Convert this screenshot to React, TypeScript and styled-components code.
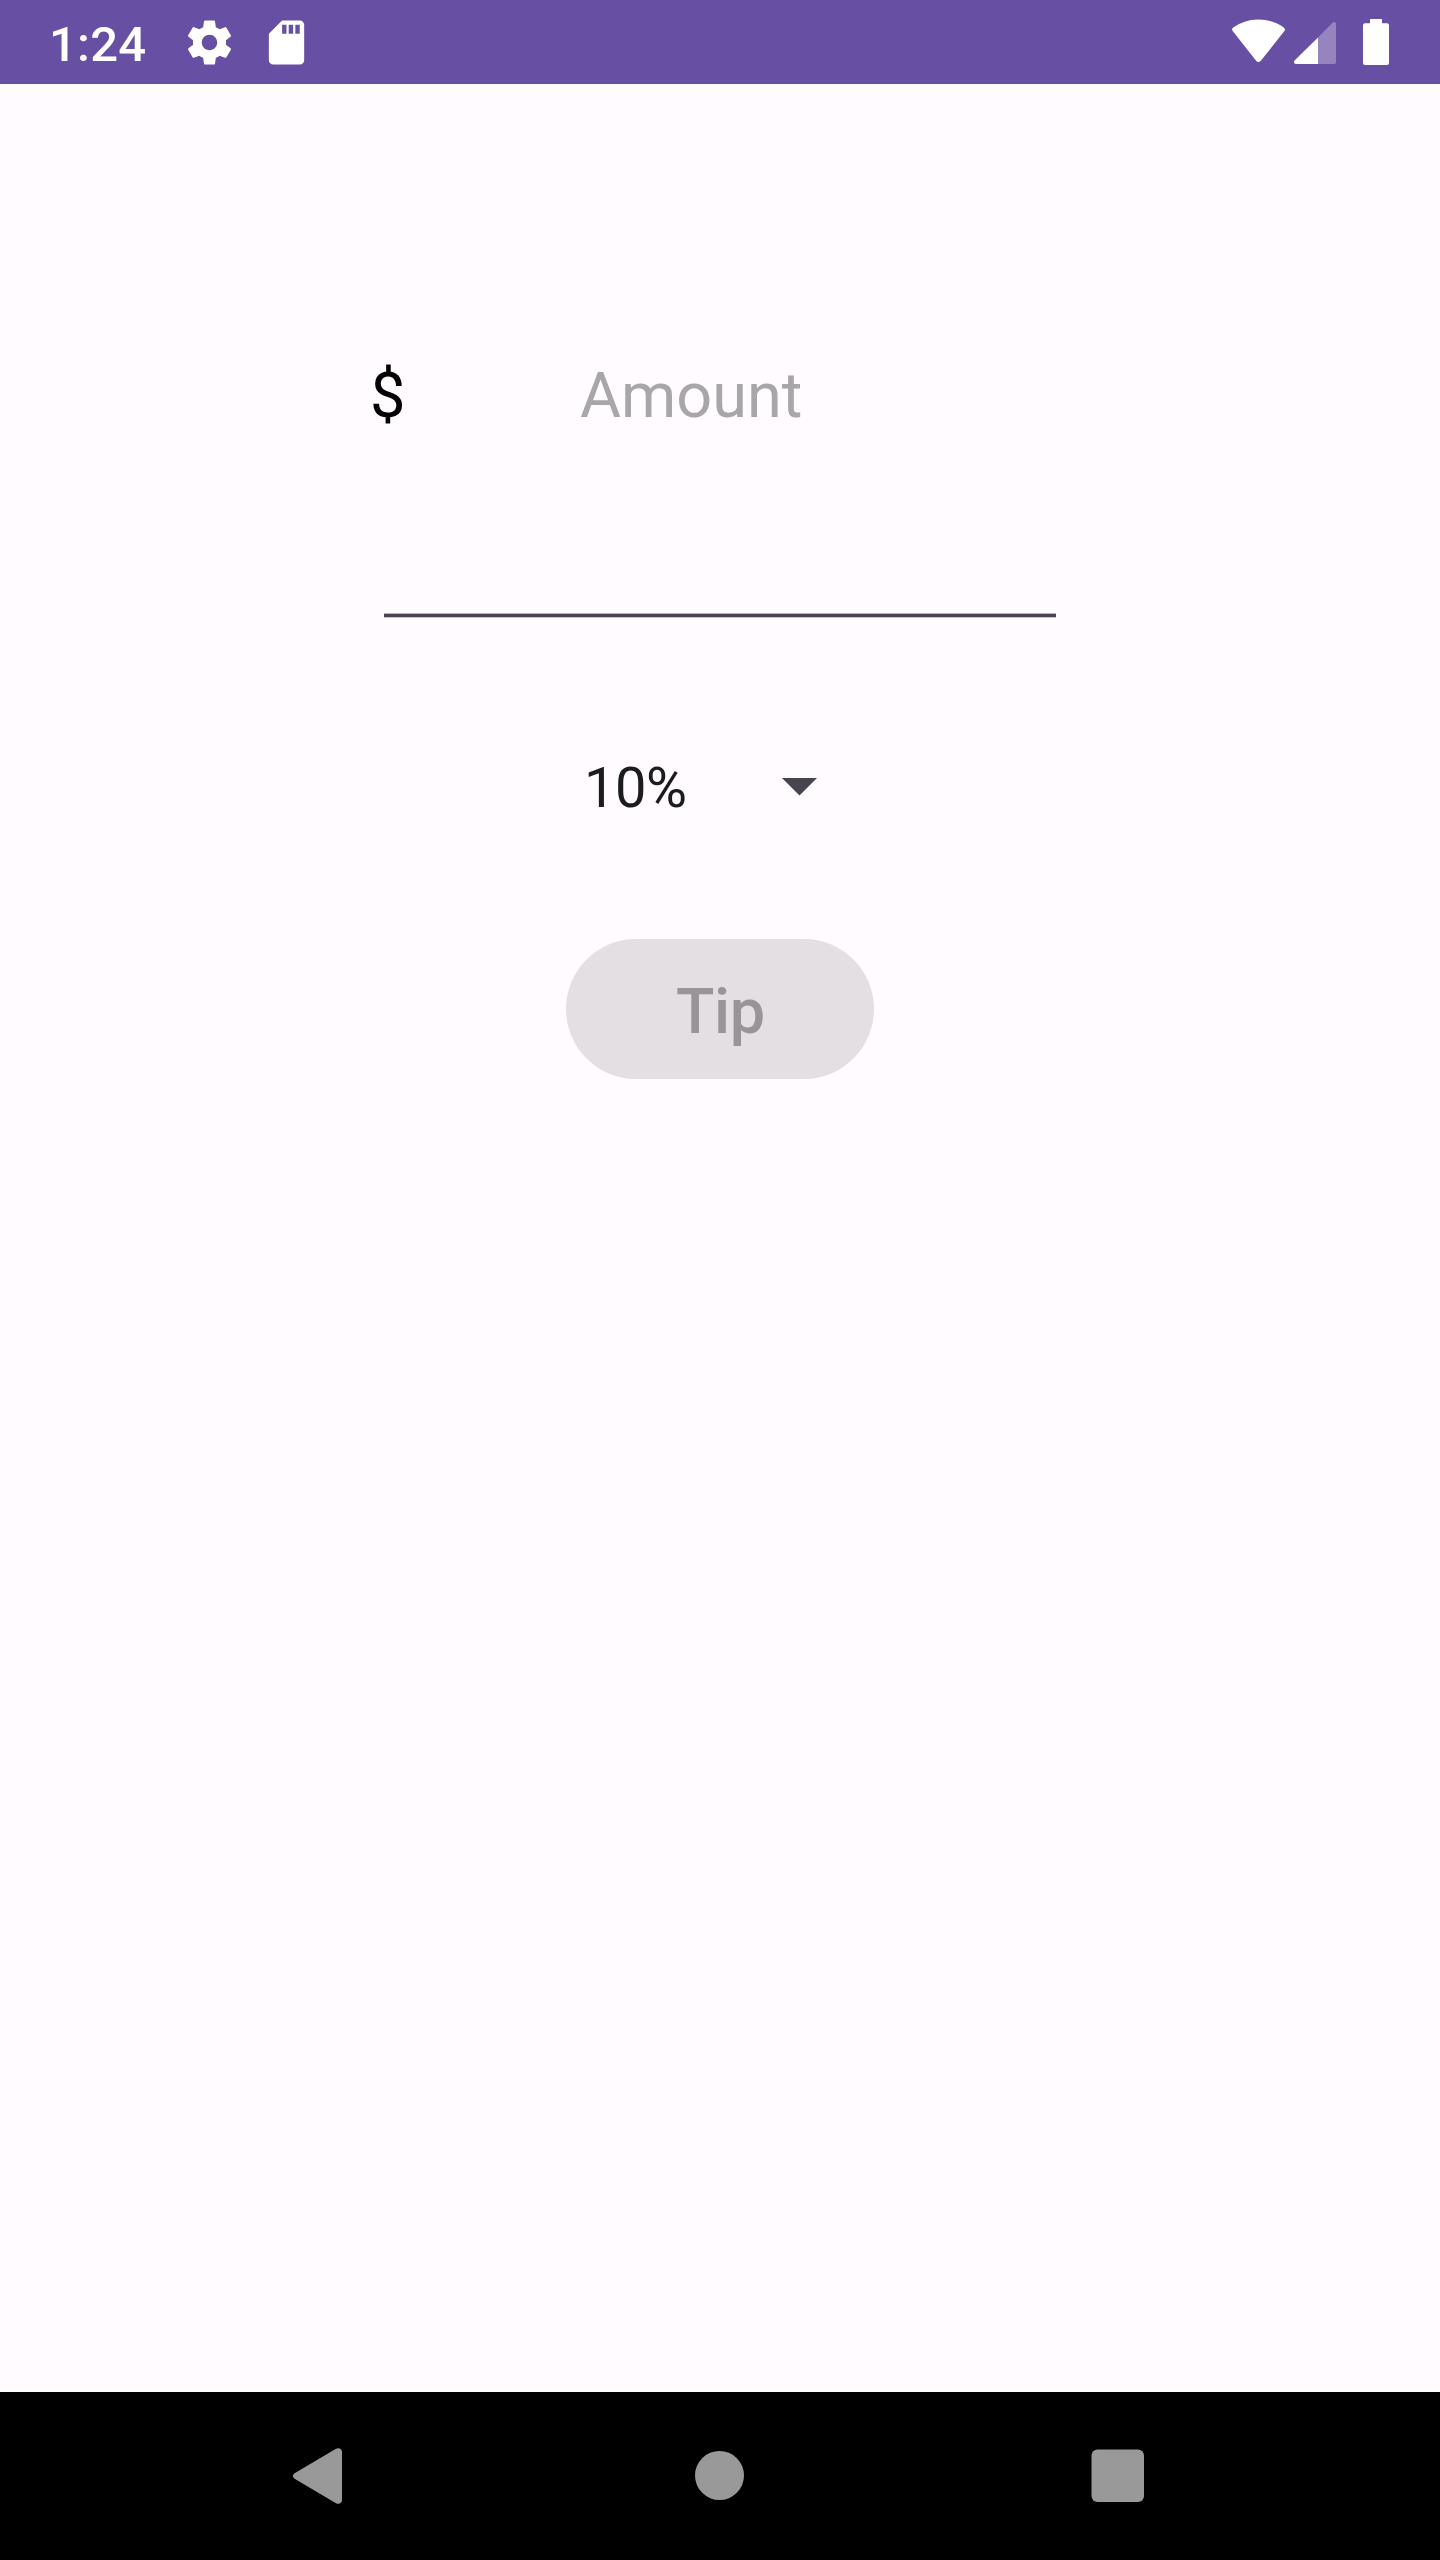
import React from "react";
import styled, { createGlobalStyle } from "styled-components";

const GlobalStyle = createGlobalStyle`
  *, *::before, *::after { box-sizing: border-box; }
  body { margin: 0; background: #fffbfe; }
`;

const Screen = styled.div`
  display: flex;
  flex-direction: column;
  width: 1440px;
  height: 2560px;
  background: #fffbfe;
  font-family: Roboto, "Liberation Sans", sans-serif;
  overflow: hidden;
`;

const StatusBar = styled.header`
  display: flex;
  justify-content: space-between;
  height: 84px;
  padding: 0 51px 0 49px;
  background: #6750a3;
  color: #fff;
`;

const StatusGroup = styled.div`
  display: flex;
  align-items: center;
  height: 84px;
`;

const Clock = styled.span`
  width: 97px;
  margin-right: 37px;
  padding-top: 5px;
  font-size: 49px;
  font-weight: 500;
  line-height: 58px;
  letter-spacing: 0.2px;
  white-space: nowrap;
`;

const Icon = styled.svg<{ $gap?: number }>`
  display: block;
  flex: none;
  margin-left: ${({ $gap = 0 }) => $gap}px;
`;

const Content = styled.main`
  display: flex;
  flex: 1;
  flex-direction: column;
  align-items: center;
`;

const AmountField = styled.section`
  display: flex;
  width: 700px;
  height: 534px;
  padding: 275px 14px 0 0;
  background: linear-gradient(#b7b4b9, #b7b4b9) 14px 529px / 672px 1px no-repeat,
    linear-gradient(#49454f, #49454f) 14px 530px / 672px 3px no-repeat,
    linear-gradient(#c9c6ca, #c9c6ca) 14px 533px / 672px 1px no-repeat;
`;

const Currency = styled.span`
  width: 210px;
  color: #000;
  font-size: 63px;
  line-height: 74px;
`;

const AmountLabel = styled.span`
  color: #a8a6a8;
  font-size: 63px;
  line-height: 74px;
`;

const PercentSelect = styled.div`
  display: flex;
  align-items: center;
  justify-content: space-between;
  width: 234px;
  height: 66px;
  margin: 137px 40px 0 0;
  padding-left: 1px;
`;

const PercentValue = styled.span`
  color: #1c1b1f;
  font-size: 56px;
  line-height: 66px;
  letter-spacing: -0.5px;
`;

const DropdownArrow = styled.svg`
  display: block;
  margin-bottom: 2px;
`;

const TipButton = styled.button`
  display: flex;
  align-items: center;
  justify-content: center;
  width: 308px;
  height: 140px;
  margin-top: 118px;
  padding: 5px 0 0 1px;
  border: 0;
  border-radius: 70px;
  background: #e4dfe2;
  color: #999499;
  font: 500 63px/74px Roboto, "Liberation Sans", sans-serif;
  letter-spacing: -0.3px;
`;

const NavBar = styled.nav`
  display: flex;
  align-items: center;
  height: 168px;
  padding: 0 0 1px 293px;
  background: #000;
`;

export default function App() {
  return (
    <>
      <GlobalStyle />
      <Screen>
        <StatusBar>
          <StatusGroup>
            <Clock>1:24</Clock>
            <Icon width="53" height="53" viewBox="0 0 24 24" fill="#fff">
              <path d="M19.43 12.98c.04-.32.07-.64.07-.98s-.03-.66-.07-.98l2.11-1.65c.19-.15.24-.42.12-.64l-2-3.46c-.12-.22-.39-.3-.61-.22l-2.49 1c-.52-.4-1.08-.73-1.69-.98l-.38-2.65C14.46 2.18 14.25 2 14 2h-4c-.25 0-.46.18-.49.42l-.38 2.65c-.61.25-1.17.59-1.69.98l-2.49-1c-.23-.09-.49 0-.61.22l-2 3.46c-.13.22-.07.49.12.64l2.11 1.65c-.04.32-.07.65-.07.98s.03.66.07.98l-2.11 1.65c-.19.15-.24.42-.12.64l2 3.46c.12.22.39.3.61.22l2.49-1c.52.4 1.08.73 1.69.98l.38 2.65c.03.24.24.42.49.42h4c.25 0 .46-.18.49-.42l.38-2.65c.61-.25 1.17-.59 1.69-.98l2.49 1c.23.09.49 0 .61-.22l2-3.46c.12-.22.07-.49-.12-.64l-2.11-1.65zM12 15.5c-1.93 0-3.5-1.57-3.5-3.5s1.57-3.5 3.5-3.5 3.5 1.57 3.5 3.5-1.57 3.5-3.5 3.5z" />
            </Icon>
            <Icon $gap={24} width="53" height="53" viewBox="0 0 24 24" fill="#fff">
              <path d="M18 2h-8L4.02 8 4 20c0 1.1.9 2 2 2h12c1.1 0 2-.9 2-2V4c0-1.1-.9-2-2-2zm-6 6h-2V4h2v4zm3 0h-2V4h2v4zm3 0h-2V4h2v4z" />
            </Icon>
          </StatusGroup>
          <StatusGroup>
            <Icon width="54" height="84" viewBox="0 0 54 84" fill="#fff">
              <path d="M26.500 19.5C17 19.5 8 22.700 1 27.700C-.2 28.700 -.1 30 .7 31.100L24.100 60.700C25.500 62.400 27.500 62.400 28.900 60.700L52.400 31.100C53.300 30 53.200 28.700 52 27.700C45.500 22.700 36.500 19.5 26.500 19.5Z" />
            </Icon>
            <Icon $gap={8} width="42" height="84" viewBox="0 0 42 84" fill="#fff">
              <path d="M24 37.500V64H2C0 64 -.7 61.800 .8 60.300Z" />
              <path opacity=".3" d="M24 37.500L38.500 22.700C40 21.300 42 22 42 24V62Q42 64 40 64H24Z" />
            </Icon>
            <Icon $gap={27} width="26" height="84" viewBox="0 0 26 84" fill="#fff">
              <path d="M7 19H19V23.300H24Q26 23.300 26 25.300V63Q26 65 24 65H2Q0 65 0 63V25.300Q0 23.300 2 23.300H7Z" />
            </Icon>
          </StatusGroup>
        </StatusBar>
        <Content>
          <AmountField>
            <Currency>$</Currency>
            <AmountLabel>Amount</AmountLabel>
          </AmountField>
          <PercentSelect>
            <PercentValue>10%</PercentValue>
            <DropdownArrow width="35" height="18" viewBox="0 0 35 18" fill="#49454f">
              <path d="M0 0H35L17.500 17.500Z" />
            </DropdownArrow>
          </PercentSelect>
          <TipButton disabled>Tip</TipButton>
        </Content>
        <NavBar>
          <Icon width="49" height="56" viewBox="0 0 49 56" fill="#999">
            <path d="M43 .8C46 -.8 49 1 49 4V52C49 55 46 56.800 43 55.200L2 31C-.7 29.400 -.7 26.600 2 25Z" />
          </Icon>
          <Icon $gap={353} width="49" height="49" viewBox="0 0 49 49" fill="#999">
            <circle cx="24.500" cy="24.500" r="24.500" />
          </Icon>
          <Icon $gap={347} width="54" height="53" viewBox="0 0 54 53" fill="#999">
            <rect x=".5" y=".4" width="52.500" height="52.500" rx="6" />
          </Icon>
        </NavBar>
      </Screen>
    </>
  );
}
